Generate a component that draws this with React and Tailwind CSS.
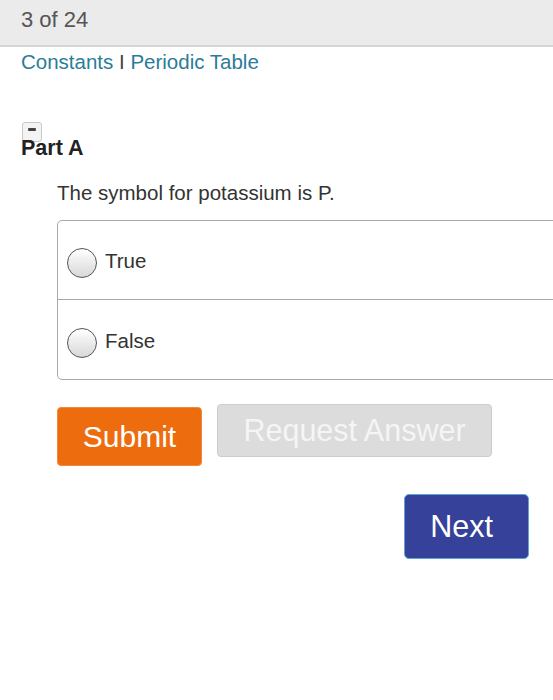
import React from "react";

function Radio() {
  return (
    <span className="block w-[30px] h-[30px] rounded-full border-[1.5px] border-[#555] bg-gradient-to-b from-white to-[#d8d8d8] shrink-0" />
  );
}

export default function App() {
  return (
    <div className="w-[553px] h-[700px] bg-white overflow-hidden relative" style={{ fontFamily: '"Liberation Sans", Arial, sans-serif' }}>
      <div className="h-[47px] bg-[#ebebeb] border-b-2 border-[#d6d6d6] pl-[21px] pt-[6px] text-[22px] leading-[28px] text-[#555]">
        3 of 24
      </div>
      <div className="pl-[21px] pt-[3px] text-[20.5px] text-[#2b7c99] leading-[24px]">
        Constants <span className="text-[#444]">I</span> Periodic Table
      </div>
      <div className="relative mt-[62px] pl-[21px]">
        <div className="absolute left-[22px] top-[-14px] w-[20px] h-[20px] rounded-[3px] border border-[#c8c8c8] bg-[#f4f4f4] flex justify-center">
          <span className="mt-[5px] w-[8px] h-[3px] bg-[#444] rounded-[1px]" />
        </div>
        <div className="relative text-[21.5px] font-bold text-[#222] leading-[24px]">Part A</div>
      </div>
      <div className="pl-[57px] mt-[21px] text-[20.5px] text-[#333] leading-[24px]">
        The symbol for potassium is P.
      </div>
      <div className="ml-[57px] mt-[15px] w-[520px] border border-[#a8a8a8] rounded-[5px]">
        <div className="h-[79px] flex items-center pl-[9px] pt-[5px] gap-[8px] border-b border-[#a8a8a8]">
          <Radio />
          <span className="text-[20.5px] text-[#333] mt-[-3px]">True</span>
        </div>
        <div className="h-[79px] flex items-center pl-[9px] pt-[6px] gap-[8px]">
          <Radio />
          <span className="text-[20.5px] text-[#333] mt-[-3px]">False</span>
        </div>
      </div>
      <div className="flex items-start ml-[57px] mt-[24px] gap-[15px]">
        <button className="mt-[3px] w-[145px] h-[59px] bg-[#ed6c0e] border border-[#f08a3a] rounded-[4px] text-white text-[30px]">
          Submit
        </button>
        <button className="w-[275px] h-[53px] bg-[#dcdcdc] border border-[#cdcdcd] rounded-[4px] text-[#f5f5f5] text-[30.5px]">
          Request Answer
        </button>
      </div>
      <div className="flex justify-end pr-[24px] mt-[28px]">
        <button className="w-[125px] h-[65px] bg-[#36419a] border border-[#5fa4d6] rounded-[5px] text-white text-[30.5px] pr-[10px]">
          Next
        </button>
      </div>
    </div>
  );
}
